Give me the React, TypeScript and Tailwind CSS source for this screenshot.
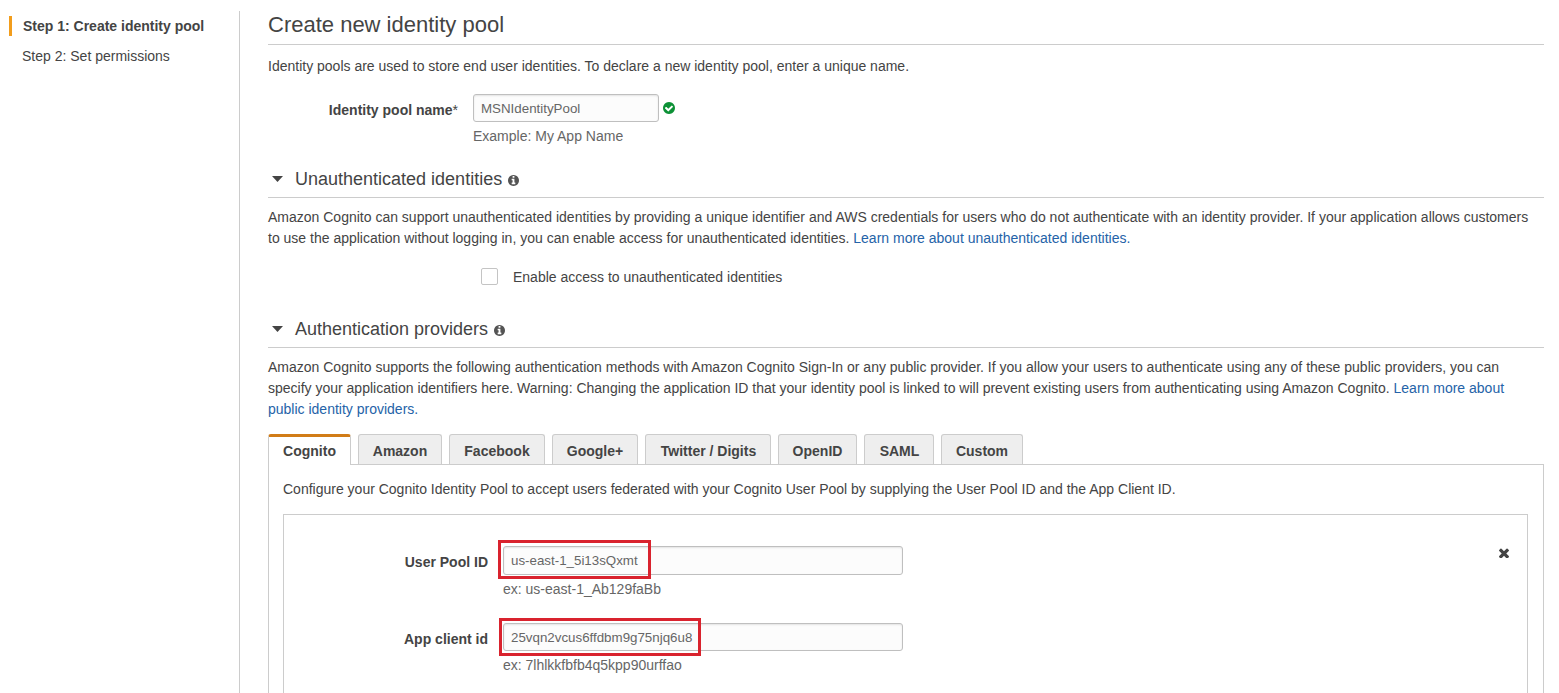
import type { ReactNode } from "react";

const CIRCLE =
  "q0 209-103 385.5t-279.5 279.5-385.5 103-385.5-103-279.5-279.5-103-385.5 103-385.5 279.5-279.5 385.5-103 385.5 103 279.5 279.5 103 385.5z";

function InfoIcon() {
  return (
    <svg viewBox="128 128 1536 1536" className="mt-px ml-1.5 size-[11px] fill-[#545454]" aria-hidden="true">
      <path
        d={
          "M1152 1376v-160q0-14-9-23t-23-9h-96v-512q0-14-9-23t-23-9h-320q-14 0-23 9t-9 23v160q0 14 9 23t23 9h96v320h-96q-14 0-23 9t-9 23v160q0 14 9 23t23 9h448q14 0 23-9t9-23zm-128-896v-192q0-14-9-23t-23-9h-192q-14 0-23 9t-9 23v192q0 14 9 23t23 9h192q14 0 23-9t9-23zm640 416" +
          CIRCLE
        }
      />
    </svg>
  );
}

function CheckIcon() {
  return (
    <svg viewBox="128 128 1536 1536" className="mt-2 ml-1 size-3 fill-[#0d9136]" aria-hidden="true">
      <path
        d={
          "M1412 734q0-28-18-46l-91-90q-19-19-45-19t-45 19l-408 407-226-226q-19-19-45-19t-45 19l-91 90q-18 18-18 46 0 27 18 45l362 362q19 19 45 19 27 0 46-19l543-543q18-18 18-45zm252 162" +
          CIRCLE
        }
      />
    </svg>
  );
}

function CloseIcon() {
  return (
    <svg viewBox="302 302 1188 1188" className="size-[10px] fill-[#444]" aria-hidden="true">
      <path d="M1490 1322q0 40-28 68l-136 136q-28 28-68 28t-68-28l-294-294-294 294q-28 28-68 28t-68-28l-136-136q-28-28-28-68t28-68l294-294-294-294q-28-28-28-68t28-68l136-136q28-28 68-28t68 28l294 294 294-294q28-28 68-28t68 28l136 136q28 28 28 68t-28 68l-294 294 294 294q28 28 28 68z" />
    </svg>
  );
}

function SectionHeading({ children }: { children: ReactNode }) {
  return (
    <h2 className="flex h-8 items-center border-b border-[#ccc] pb-1 text-[18px] leading-[27px]">
      <svg viewBox="0 0 11 6" className="mr-3 mb-0.5 ml-1 h-1.5 w-[11px] fill-[#444]" aria-hidden="true">
        <path d="M0 0h11L5.5 6z" />
      </svg>
      {children}
      <InfoIcon />
    </h2>
  );
}

const inputClass =
  "block rounded-[3px] border border-[#bfbfbf] bg-[#fcfcfc] px-[7px] text-[13.333px] text-[#666] shadow-[inset_0_1px_2px_rgba(0,0,0,0.1)] outline-none";

const tabs = [
  { label: "Amazon", width: "w-[84px]" },
  { label: "Facebook", width: "w-24" },
  { label: "Google+", width: "w-[86px]" },
  { label: "Twitter / Digits", width: "w-[126px] pl-px" },
  { label: "OpenID", width: "w-[79px]" },
  { label: "SAML", width: "w-[70px] pl-px" },
  { label: "Custom", width: "w-[82px]" },
];

export default function App() {
  return (
    <div className="flex h-[693px] overflow-hidden bg-white pt-[11px] font-['Liberation_Sans',Arial,sans-serif] text-[14px] leading-[21px] text-[#444]">
      <nav className="w-[239px] shrink-0 pt-[5px] pl-[9px]">
        <div className="flex h-5 items-center border-l-3 border-[#f29d1c] pl-[11px] font-bold">
          Step 1: Create identity pool
        </div>
        <div className="mt-[10px] flex h-5 items-center pl-[13px]">Step 2: Set permissions</div>
      </nav>

      <main className="w-[1305px] shrink-0 border-l border-[#ccc] pl-7">
        <h1 className="h-[34px] border-b border-[#ccc] text-[22px] leading-[27px]">Create new identity pool</h1>
        <p className="mt-[11px]">
          Identity pools are used to store end user identities. To declare a new identity pool, enter a unique name.
        </p>

        <div className="mt-[17px] flex">
          <label htmlFor="pool" className="mr-[15px] w-[190px] pt-1.5 text-right font-bold">
            Identity pool name<span className="font-normal">*</span>
          </label>
          <div>
            <div className="flex">
              <input id="pool" defaultValue="MSNIdentityPool" className={inputClass + " h-7 w-[186px]"} />
              <CheckIcon />
            </div>
            <div className="mt-1 text-[#666]">Example: My App Name</div>
          </div>
        </div>

        <div className="mt-[19px]">
          <SectionHeading>Unauthenticated identities</SectionHeading>
        </div>
        <p className="mt-[9px] whitespace-nowrap">
          Amazon Cognito can support unauthenticated identities by providing a unique identifier and AWS credentials for
          users who do not authenticate with an identity provider. If your application allows customers
          <br />
          to use the application without logging in, you can enable access for unauthenticated identities.{" "}
          <a className="text-[#2563a8]">Learn more about unauthenticated identities.</a>
        </p>
        <label className="mt-[18px] ml-[213px] flex h-[18px] items-center">
          <input
            type="checkbox"
            className="mr-[15px] size-[17px] appearance-none rounded-[2px] border border-[#c4c4c4] bg-white"
          />
          <span className="pt-0.5">Enable access to unauthenticated identities</span>
        </label>

        <div className="mt-[31px]">
          <SectionHeading>Authentication providers</SectionHeading>
        </div>
        <p className="mt-[9px] whitespace-nowrap">
          Amazon Cognito supports the following authentication methods with Amazon Cognito Sign-In or any public
          provider. If you allow your users to authenticate using any of these public providers, you can
          <br />
          specify your application identifiers here. Warning: Changing the application ID that your identity pool is
          linked to will prevent existing users from authenticating using Amazon Cognito.{" "}
          <a className="text-[#2563a8]">
            Learn more about
            <br />
            public identity providers.
          </a>
        </p>

        <div className="mt-[14px] flex gap-[7px]">
          <div className="z-10 -mb-px flex h-[31px] w-[83px] justify-center rounded-t-[3px] border-x border-t-3 border-x-[#ccc] border-t-[#d17c17] bg-white pt-[4px] font-bold">
            Cognito
          </div>
          {tabs.map((tab) => (
            <div
              key={tab.label}
              className={
                "flex h-[30px] justify-center rounded-t-[3px] border border-b-0 border-[#ccc] bg-[#eee] pt-1.5 font-bold " +
                tab.width
              }
            >
              {tab.label}
            </div>
          ))}
        </div>

        <div className="h-[300px] border border-[#ccc] pt-[14px] pr-[15px] pl-[14px]">
          <p>
            Configure your Cognito Identity Pool to accept users federated with your Cognito User Pool by supplying the
            User Pool ID and the App Client ID.
          </p>
          <div className="mt-[14px] flex h-[300px] justify-between border border-[#ccc] pt-[31px] pr-[18px]">
            <div>
              <div className="flex">
                <label htmlFor="user-pool" className="mr-[15px] w-[204px] pt-1.5 text-right font-bold">
                  User Pool ID
                </label>
                <div className="relative">
                  <input id="user-pool" defaultValue="us-east-1_5i13sQxmt" className={inputClass + " h-[29px] w-[400px]"} />
                  <div className="absolute -top-1.5 -left-[5px] h-[39px] w-[153px] border-3 border-[#d9232e]" />
                  <div className="mt-1 text-[#666]">ex: us-east-1_Ab129faBb</div>
                </div>
              </div>
              <div className="mt-[23px] flex">
                <label htmlFor="client" className="mr-[15px] w-[204px] pt-1.5 text-right font-bold">
                  App client id
                </label>
                <div className="relative">
                  <input id="client" defaultValue="25vqn2vcus6ffdbm9g75njq6u8" className={inputClass + " h-7 w-[400px]"} />
                  <div className="absolute -top-[5px] -left-1 h-[38px] w-[202px] border-3 border-[#d9232e]" />
                  <div className="mt-1 text-[#666]">ex: 7lhlkkfbfb4q5kpp90urffao</div>
                </div>
              </div>
            </div>
            <button aria-label="Remove" className="mt-0.5 h-[10px]">
              <CloseIcon />
            </button>
          </div>
        </div>
      </main>
    </div>
  );
}
